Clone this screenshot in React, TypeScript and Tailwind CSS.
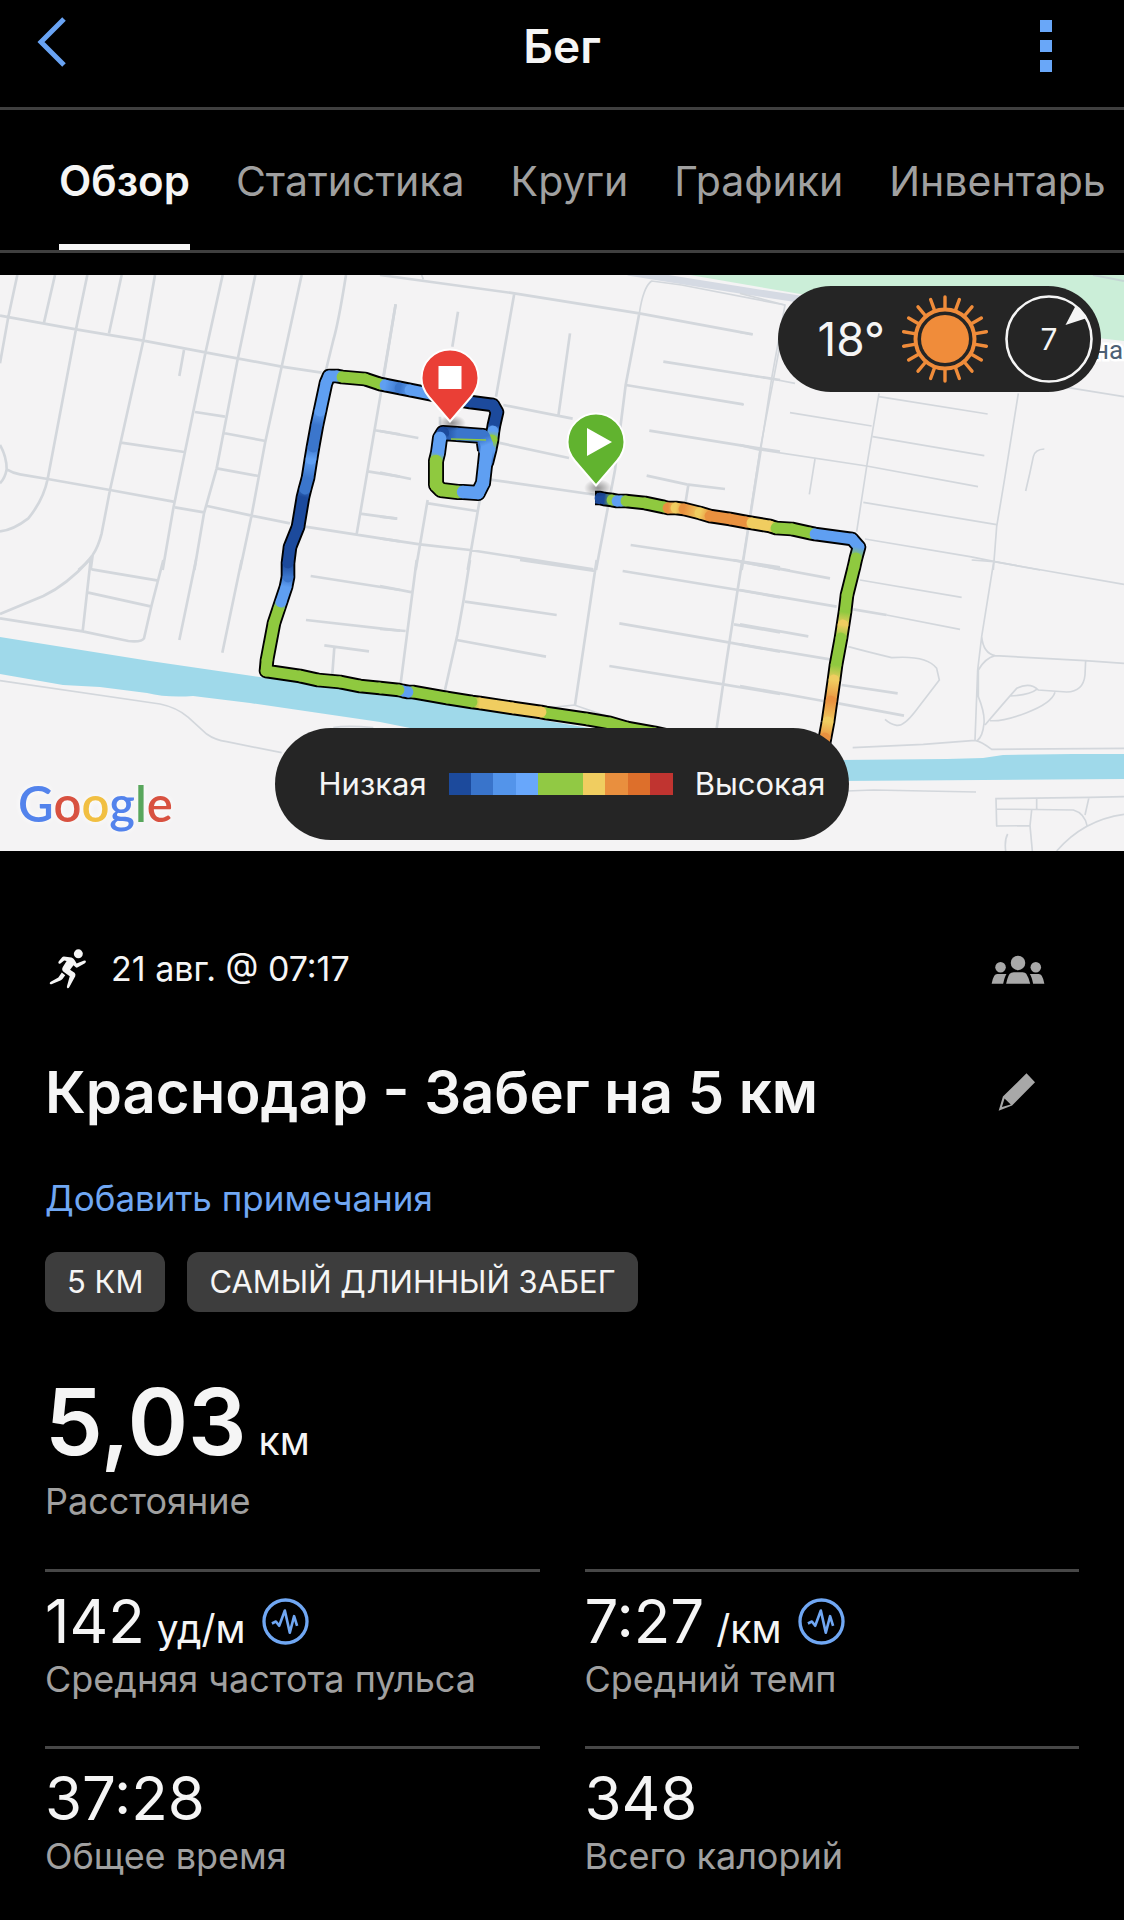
import { useState } from 'react';

type RoutePoint = [x: number, y: number, color: string];

interface Tile {
  x: number;
  y: number;
  roads?: string;
  lanes?: string;
}

const NAVY = '#1c4a9c';
const BLUE = '#3b76cc';
const SKY = '#5f9ff2';
const GREEN = '#8fc93f';
const YELLOW = '#f0cd60';
const AMBER = '#e9913f';

const LEGEND = [
  'bg-[#1c4a9c]',
  'bg-[#3974cb]',
  'bg-[#5394ea]',
  'bg-[#68a7fb]',
  'bg-[#91c944]',
  'bg-[#91c944]',
  'bg-[#f0cd60]',
  'bg-[#e98f3e]',
  'bg-[#dd6f2b]',
  'bg-[#c03430]',
];

const TABS = ['Обзор', 'Статистика', 'Круги', 'Графики', 'Инвентарь'];

const STATS = [
  { value: '142', unit: 'уд/м', label: 'Средняя частота пульса', zones: true },
  { value: '7:27', unit: '/км', label: 'Средний темп', zones: true },
  { value: '37:28', label: 'Общее время' },
  { value: '348', label: 'Всего калорий' },
];

// street geometry, three units per map pixel
const TILES: Tile[] = [
  {
    x: 0,
    y: -5,
    roads:
      'M52 15L25 140L0 280M165 15L132 158M262 15L228 178L143 627Q130 690 85 745Q40 780 0 784M365 15L327 190M465 15L430 212L330 660L305 790Q295 830 278 855Q255 885 235 900M0 137L228 178L430 212L616 247L845 290L965 308M668 15L616 250L555 545L520 715L500 830L488 900M552 240L538 318M766 15L713 268L650 595L612 730L583 900M905 15L845 290L795 520L755 735L720 900M1038 15Q1015 160 1000 210L978 300M585 426L675 440M670 489L797 513M650 595L775 618M363 518L553 546M525 712L612 727M622 708L755 737L870 760M915 770L1200 814M0 525Q20 560 20 598Q15 625 0 640M20 598Q40 610 60 613L143 627L330 660L520 695M1187 103L1152 315L1070 792M1120 480L1200 493M1103 604L1200 620M1080 731L1190 746M278 855L272 900',
  },
  {
    x: 380,
    y: -5,
    roads:
      'M0 15L403 70L778 130L1118 193M47 103L10 320M234 125L217 230M403 70L348 380M570 190L535 438M370 405L578 446M778 130L737 345L705 600L648 900M850 275L1200 330M737 345L1090 403M808 482L1200 545M800 617L920 643L1035 657M925 645L917 695M0 483L115 504M0 608L93 627M0 740L52 746M0 805L120 823L270 840L640 898M355 518L567 564M325 628L650 675M145 700L290 723M143 690L107 900M300 685L263 900M180 440V465M752 825L1200 892',
    lanes: 'M1215 105L905 45L815 33Q790 50 778 130M125 15L130 28M1200 225L1140 540L1085 900',
  },
  {
    x: 740,
    y: -5,
    roads: 'M62 540L5 900M0 525L62 540',
    lanes:
      'M0 70L135 105L95 325L62 540M0 187L38 193M0 312L98 327L165 340M0 402L12 404M417 370L395 500L380 590L350 785M417 380L743 432M150 428L395 468M398 500L733 557M62 540L380 588L714 650M225 567L208 673M370 697L770 764M375 807L690 860L765 875L900 900M835 370L795 620L770 770L760 900M980 352L1152 380M913 537Q885 538 880 560Q870 610 857 663M5 875L150 900',
  },
  {
    x: 0,
    y: 285,
    roads:
      'M268 0Q200 75 130 108L0 162M490 0L455 135L432 235Q425 247 385 243L248 214L0 175M588 0L538 240M725 0L667 278M272 0L248 214M275 28L475 62M265 98L455 140M932 48L1200 90M918 180L1200 212M973 256L1107 274M1003 262L997 342',
    lanes:
      'M0 362L480 432Q530 442 565 472L620 522Q645 540 680 545L845 578M1000 503Q1040 495 1120 503',
  },
  {
    x: 380,
    y: 285,
    roads:
      'M110 0L62 370M270 0L250 125L232 225L195 390M0 78L97 97M0 207L77 213M420 0L645 33M650 0L585 435M255 125L530 165M230 240L498 290M728 33L1075 90L1200 112M1060 0L1200 28M718 190L1050 248L1200 275M688 318L1030 373L1200 402M1087 0L1040 300L1010 505M1062 193L1200 217',
    lanes: 'M510 443L583 435L700 475L800 500',
  },
  {
    x: 740,
    y: 285,
    roads:
      'M0 5L270 55M0 90L290 140M340 148L440 165M0 193L205 229M0 253L270 298M0 378L250 423M305 375L473 400M295 430L492 467',
    lanes:
      'M762 0L725 230L713 330L705 540M695 0L762 5L1152 73M440 165L660 208M360 60L665 112M325 260Q380 275 455 293Q560 285 590 325L598 360Q560 410 525 455Q490 500 470 496Q450 492 435 478M338 563L550 553L705 541Q725 545 755 568L1152 565M725 230Q730 280 765 287L1035 302L1152 310M765 287Q735 295 715 330V410Q735 460 732 490Q728 530 712 541M1037 300L1035 345Q1030 395 980 396L895 390Q870 365 830 385Q790 430 735 495M810 408Q870 405 890 388M945 397Q935 430 860 458Q790 485 750 482M320 693L400 690L708 696M770 798L768 716L1050 712L1152 710M890 715V748M768 747L1000 750Q1035 760 1042 800M1047 712L1035 765M768 798L870 797L875 750M870 797L877 873M803 822Q793 840 797 873M950 873Q1030 780 1152 763',
  },
];

const ROUTE: RoutePoint[] = [
  [600, 223, NAVY],
  [604, 224, NAVY],
  [612, 225, GREEN],
  [617, 226, SKY],
  [621, 226, SKY],
  [626, 226, GREEN],
  [645, 228, GREEN],
  [664, 232, GREEN],
  [668, 233, AMBER],
  [676, 233, YELLOW],
  [684, 234, AMBER],
  [700, 238, YELLOW],
  [710, 241, AMBER],
  [730, 244, AMBER],
  [746, 247, AMBER],
  [752, 248, YELLOW],
  [770, 251, YELLOW],
  [776, 253, GREEN],
  [792, 254, GREEN],
  [810, 258, GREEN],
  [815, 259, SKY],
  [852, 264, SKY],
  [859, 272, SKY],
  [856, 283, GREEN],
  [854, 292, GREEN],
  [847, 320, GREEN],
  [845, 337, GREEN],
  [843, 350, YELLOW],
  [841, 363, GREEN],
  [836, 390, GREEN],
  [834, 405, YELLOW],
  [831, 426, AMBER],
  [828, 447, YELLOW],
  [825, 463, AMBER],
  [820, 490, AMBER],
  [700, 468, GREEN],
  [655, 458, GREEN],
  [627, 453, GREEN],
  [610, 448, GREEN],
  [587, 444, GREEN],
  [546, 438, GREEN],
  [541, 437, YELLOW],
  [513, 433, YELLOW],
  [480, 428, YELLOW],
  [472, 427, GREEN],
  [447, 423, GREEN],
  [413, 417, GREEN],
  [408, 417, SKY],
  [403, 416, SKY],
  [399, 415, GREEN],
  [380, 413, GREEN],
  [360, 411, GREEN],
  [340, 407, GREEN],
  [318, 405, GREEN],
  [300, 401, GREEN],
  [266, 396, GREEN],
  [267, 385, GREEN],
  [274, 348, GREEN],
  [279, 333, GREEN],
  [281, 327, SKY],
  [286, 312, SKY],
  [288, 302, BLUE],
  [288, 288, NAVY],
  [290, 272, NAVY],
  [298, 252, NAVY],
  [303, 222, NAVY],
  [305, 214, BLUE],
  [308, 203, BLUE],
  [311, 184, SKY],
  [313, 172, BLUE],
  [317, 150, BLUE],
  [320, 136, SKY],
  [326, 108, SKY],
  [329, 101, SKY],
  [337, 101, SKY],
  [342, 102, GREEN],
  [365, 104, GREEN],
  [380, 109, GREEN],
  [385, 110, SKY],
  [400, 113, BLUE],
  [410, 115, SKY],
  [430, 119, SKY],
  [453, 124, BLUE],
  [470, 127, NAVY],
  [493, 130, NAVY],
  [497, 137, NAVY],
  [494, 150, NAVY],
  [493, 156, SKY],
  [492, 165, GREEN],
  [490, 175, SKY],
  [487, 187, BLUE],
  [485, 190, SKY],
];

const LOOP: RoutePoint[] = [
  [485, 175, BLUE],
  [483, 161, BLUE],
  [457, 159, BLUE],
  [443, 158, NAVY],
  [440, 163, SKY],
  [438, 178, SKY],
  [436, 186, GREEN],
  [436, 210, GREEN],
  [441, 215, GREEN],
  [458, 217, GREEN],
  [463, 217, SKY],
  [478, 218, SKY],
  [483, 208, SKY],
  [485, 190, SKY],
  [487, 170, SKY],
  [484, 162, BLUE],
];

const RouteLine = ({ id, points, width }: { id: string; points: RoutePoint[]; width: number }) => {
  const segments = points.slice(1).map((to, i) => ({ from: points[i], to, key: `${id}-${i}` }));

  return (
    <g fill="none" strokeWidth={width} strokeLinecap="round">
      {segments.map(({ from, to, key }) => (
        <g key={key}>
          <linearGradient id={key} gradientUnits="userSpaceOnUse" x1={from[0]} y1={from[1]} x2={to[0]} y2={to[1]}>
            <stop offset="0" stopColor={from[2]} />
            <stop offset="1" stopColor={to[2]} />
          </linearGradient>
          <path d={`M${from[0]} ${from[1]}L${to[0]} ${to[1]}`} stroke={`url(#${key})`} />
        </g>
      ))}
    </g>
  );
};

const toPoints = (points: RoutePoint[]) => points.map(([x, y]) => `${x},${y}`).join(' ');

const PIN = 'M0 43.5L-21 19Q-28.500 10-28.500 0A28.500 28.500 0 0 1 28.500 0Q28.500 10 21 19Z';

const RouteMap = () => (
  <svg
    viewBox="0 0 1124 576"
    preserveAspectRatio="xMidYMid slice"
    className="block w-full"
    role="img"
    aria-label="Карта маршрута"
  >
    <defs>
      <radialGradient id="pin-shadow">
        <stop offset="0" stopColor="#000" stopOpacity="0.4" />
        <stop offset="1" stopColor="#000" stopOpacity="0" />
      </radialGradient>
    </defs>
    <rect width="1124" height="576" fill="#f4f3f4" />

    {/* park and highway */}
    <path d="M690 0H1124V66L940 45L806 20Z" fill="#cbeed8" />
    <path d="M628 -3L740 15L812 26" stroke="#d5dae3" strokeWidth="7" fill="none" />
    <path d="M1093 0L1124 6" stroke="#c3d5d3" strokeWidth="2" fill="none" />

    {/* river */}
    <path
      d="M0 362L150 386L260 402L400 420L600 455L600 475L420 455L380 447L250 428L193 421Q167 423 147 418L100 412L63 410L0 399Z"
      fill="#9fd9ea"
    />
    <path d="M840 485L947 484L983 483L1003 480L1073 479H1124V504L840 506Z" fill="#9fd9ea" />

    {TILES.map((tile) => (
      <g
        key={`${tile.x}:${tile.y}`}
        transform={`translate(${tile.x} ${tile.y}) scale(0.33333)`}
        fill="none"
        stroke="#d3d7dc"
      >
        {tile.roads && <path d={tile.roads} strokeWidth="8" />}
        {tile.lanes && <path d={tile.lanes} strokeWidth="5" />}
      </g>
    ))}

    <text
      x="1094"
      y="84"
      fontSize="26"
      fill="#4d6075"
      stroke="#fff"
      strokeWidth="5"
      paintOrder="stroke"
      className="font-['Roboto',sans-serif]"
    >
      на
    </text>

    {/* route */}
    <g fill="none" stroke="#000" strokeLinejoin="round">
      <polyline points={`595,223 ${toPoints(ROUTE)}`} strokeWidth="14.6" />
      <polyline points={toPoints(LOOP)} strokeWidth="16" />
    </g>
    <path d="M596 223L601 224" stroke={NAVY} strokeWidth="10.8" />
    <RouteLine id="route" points={ROUTE} width={10.8} />
    <RouteLine id="loop" points={LOOP} width={12.4} />
    <path d="M451 164L486 165" stroke={GREEN} strokeWidth="1.5" />

    <ellipse cx="452" cy="148" rx="14" ry="8" fill="url(#pin-shadow)" />
    <ellipse cx="598" cy="213" rx="14" ry="9" fill="url(#pin-shadow)" />
    <g transform="translate(450 103)">
      <path d={PIN} fill="#ea3f36" stroke="#fff" strokeWidth="2" />
      <rect x="-11.500" y="-12" width="23" height="23" fill="#fff" />
    </g>
    <g transform="translate(596 167)">
      <path d={PIN} fill="#61b32f" stroke="#fff" strokeWidth="2" />
      <path d="M-9 -14L16 0L-9 14Z" fill="#fff" />
    </g>
  </svg>
);

const SunIcon = () => (
  <svg viewBox="-44 -44 88 88" className="size-[88px]" aria-hidden="true">
    <circle r="24" fill="#f08c3a" />
    <circle r="29.5" fill="none" stroke="#f08c3a" strokeWidth="4" />
    {Array.from({ length: 18 }, (_, i) => (
      <path key={i} d="M0 -31V-42" stroke="#f08c3a" strokeWidth="3.4" strokeLinecap="round" transform={`rotate(${i * 20})`} />
    ))}
  </svg>
);

const WindIcon = () => (
  <svg viewBox="-44 -44 88 88" className="size-[88px]" aria-hidden="true">
    <circle r="42.5" fill="none" stroke="#f5f5f5" strokeWidth="2.6" />
    <path d="M16.500 -14L26.500 -33Q33 -29 38 -21Z" fill="#f5f5f5" />
  </svg>
);

const RunnerIcon = () => (
  <svg viewBox="90 57 110 116" className="h-10 w-[38px]" fill="#f5f5f5" aria-hidden="true">
    <circle cx="175" cy="71" r="13" />
    <path d="M133 79L155 82Q161 84 164 89L170 99L190 91Q197 89 197 94Q196 97 193 99L172 111Q168 112 165 108L161 104L151 117L164 126Q168 130 166 136L149 167Q146 172 143 170Q141 168 142 165L150 136L133 124Q125 118 130 109L141 92L134 90L123 99Q118 101 117 97Q117 94 119 92L128 81Q130 79 133 79Z" />
    <path d="M127 125L137 133L129 144Q127 147 123 148L97 159Q92 160 92 156Q92 154 95 152L117 140Z" />
  </svg>
);

const GroupIcon = () => (
  <svg viewBox="62 71 162 88" className="h-[29px] w-[54px]" fill="#a8a8a8" aria-hidden="true">
    <circle cx="143" cy="95" r="22" />
    <path d="M107 158Q112 136 118 128Q122 123 130 123H157Q165 123 168 128Q175 138 180 158Z" />
    <circle cx="90" cy="108" r="16" />
    <path d="M63 158Q66 142 71 134Q74 129 80 129H108Q103 136 98 158Z" />
    <circle cx="197" cy="108" r="16" />
    <path d="M223 158Q220 142 215 134Q212 129 206 129H179Q184 136 189 158Z" />
  </svg>
);

const PencilIcon = () => (
  <svg viewBox="87 428 114 116" className="size-[38px]" fill="#a8a8a8" aria-hidden="true">
    <path
      fillRule="evenodd"
      d="M173 429L199 456L129 527L88 543L101 500ZM106 506L98 532L125 524Z"
    />
  </svg>
);

const ZonesIcon = () => (
  <svg
    viewBox="41 49 142 142"
    className="size-[47px]"
    fill="none"
    stroke="#70a7f3"
    strokeLinejoin="round"
    aria-hidden="true"
  >
    <circle cx="112" cy="120" r="65" strokeWidth="10" />
    <path d="M71 126L83 120L93 133L110 87L125 154L138 104L147 133" strokeWidth="8" />
  </svg>
);

const GoogleMark = () => (
  <span className="font-['Lato',sans-serif] text-[49px]/[60px] font-semibold [text-shadow:0_0_6px_#fff]">
    <span className="text-[#5383ec]">G</span>
    <span className="text-[#d85140]">o</span>
    <span className="text-[#f1bf42]">o</span>
    <span className="text-[#5383ec]">g</span>
    <span className="text-[#58a65c]">l</span>
    <span className="text-[#d85140]">e</span>
  </span>
);

export default function App() {
  const [activeTab, setActiveTab] = useState(TABS[0]);

  return (
    <div className="min-h-screen overflow-x-hidden bg-black font-['Inter',sans-serif] text-[#f5f5f5]">
      <header className="grid grid-cols-3 items-center border-b-3 border-[#3f3f3f] px-9 pt-3 pb-[33px]">
        <button type="button" aria-label="Назад" className="justify-self-start">
          <svg viewBox="0 0 32 52" className="h-[52px] w-8" fill="none" stroke="#69a3f3" strokeWidth="5">
            <path d="M28 2L5 25L28 48" />
          </svg>
        </button>
        <h1 className="pt-[6px] text-center text-[46px]/[56px] font-semibold">Бег</h1>
        <button type="button" aria-label="Меню" className="mr-9 flex flex-col gap-2 justify-self-end pt-[6px]">
          <span className="size-3 bg-[#69a7f8]" />
          <span className="size-3 bg-[#69a7f8]" />
          <span className="size-3 bg-[#69a7f8]" />
        </button>
      </header>

      <nav className="flex gap-[46px] overflow-hidden border-b-3 border-[#3f3f3f] pl-[59px] whitespace-nowrap">
        {TABS.map((tab) => (
          <button
            key={tab}
            type="button"
            onClick={() => setActiveTab(tab)}
            className={
              tab === activeTab
                ? 'border-b-6 border-[#f5f5f5] pt-[46px] pb-[38px] text-[42px]/[50px] font-semibold'
                : 'border-b-6 border-transparent pt-[46px] pb-[38px] text-[41px]/[50px] text-[#a0a0a0]'
            }
          >
            {tab}
          </button>
        ))}
      </nav>

      <section className="relative mt-[22px]">
        <RouteMap />
        <div className="absolute top-[11px] right-[23px] flex h-[106px] items-center gap-4 rounded-full bg-[#252525] pr-2 pl-10">
          <span className="text-[46px]/[56px]">18°</span>
          <SunIcon />
          <div className="relative">
            <WindIcon />
            <span className="absolute inset-0 flex items-center justify-center text-[30px]/[36px]">7</span>
          </div>
        </div>
        <div className="absolute bottom-[18px] left-[18px]">
          <GoogleMark />
        </div>
        <div className="absolute inset-x-0 bottom-[11px] flex justify-center">
          <div className="flex h-28 items-center gap-[22px] rounded-full bg-[#252525] pr-6 pl-11 text-[31px]/[36px]">
            <span>Низкая</span>
            <div className="flex w-56">
              {LEGEND.map((color, i) => (
                <span key={i} className={`h-[22px] flex-1 ${color}`} />
              ))}
            </div>
            <span>Высокая</span>
          </div>
        </div>
      </section>

      <main className="px-[45px] pt-[98px] pb-11">
        <div className="flex items-center justify-between pr-[34px]">
          <div className="flex items-center gap-6 pl-1">
            <RunnerIcon />
            <span className="text-[34px]/[40px]">21 авг. @ 07:17</span>
          </div>
          <button type="button" aria-label="Доступ">
            <GroupIcon />
          </button>
        </div>

        <div className="mt-[67px] flex items-center justify-between pr-[43px]">
          <h2 className="text-[58px]/[72px] font-semibold">Краснодар - Забег на 5 км</h2>
          <button type="button" aria-label="Изменить">
            <PencilIcon />
          </button>
        </div>

        <a href="#notes" className="mt-12 block text-[35px]/[44px] text-[#70a7f3]">
          Добавить примечания
        </a>

        <div className="mt-8 flex gap-[22px] text-[31px]/[60px]">
          <span className="rounded-xl bg-[#3d3d3d] px-[22px]">5 КМ</span>
          <span className="rounded-xl bg-[#3d3d3d] px-[22px]">САМЫЙ ДЛИННЫЙ ЗАБЕГ</span>
        </div>

        <div className="mt-[62px]">
          <p className="flex items-baseline gap-3 text-[92px]/[96px] font-semibold">
            5,03
            <span className="text-[39px]/[48px] font-normal">км</span>
          </p>
          <p className="mt-[11px] text-[36px]/[40px] text-[#a0a0a0]">Расстояние</p>
        </div>

        <div className="mt-12 grid grid-cols-2 gap-x-[45px]">
          {STATS.map((stat) => (
            <div key={stat.label} className="border-t-3 border-[#474747] pt-[17px] pb-[47px]">
              <div className="flex items-center gap-4">
                <p className="flex items-baseline gap-3 text-[60px]/[64px]">
                  {stat.value}
                  {stat.unit && <span className="text-[39px]/[48px]">{stat.unit}</span>}
                </p>
                {stat.zones && <ZonesIcon />}
              </div>
              <p className="mt-[6px] text-[36px]/[40px] text-[#a0a0a0]">{stat.label}</p>
            </div>
          ))}
        </div>
      </main>
    </div>
  );
}
